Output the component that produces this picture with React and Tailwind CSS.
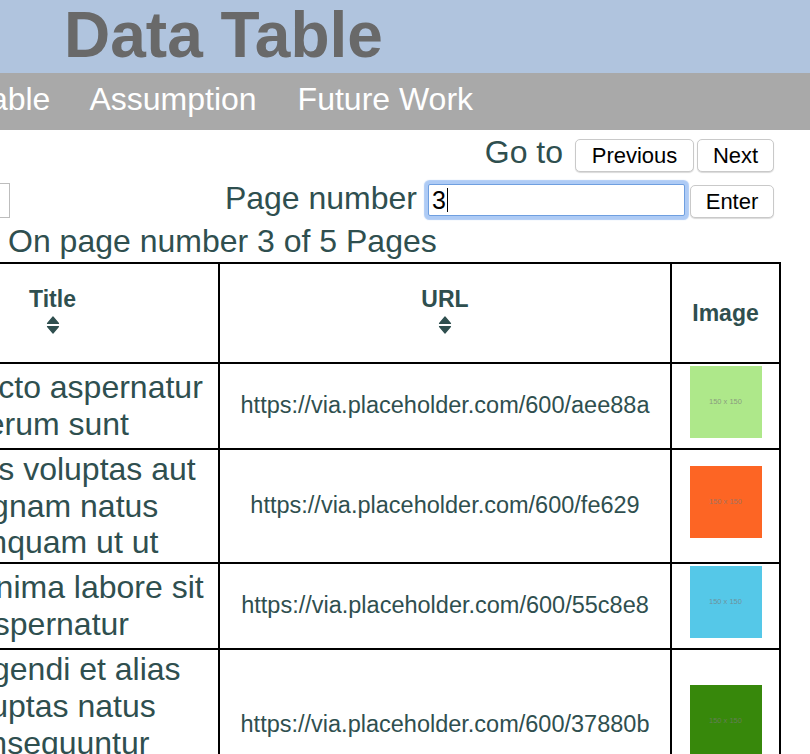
import React from "react";

const SortIcon = () => (
  <svg width="14" height="18" viewBox="0 0 14 18" className="block">
    <path d="M7 1 L12.5 7.5 H1.5 Z" fill="#2f4f4f" stroke="#2f4f4f" strokeWidth="1.2" strokeLinejoin="round" />
    <path d="M1.5 10.5 H12.5 L7 17 Z" fill="#2f4f4f" stroke="#2f4f4f" strokeWidth="1.2" strokeLinejoin="round" />
  </svg>
);

const rows = [
  {
    title: "architecto aspernatur rerum sunt",
    url: "https://via.placeholder.com/600/aee88a",
    img: "bg-[#aee88a]",
    h: "h-[86px]",
  },
  {
    title: "dolores voluptas aut magnam natus quinquam ut ut",
    url: "https://via.placeholder.com/600/fe629",
    img: "bg-[#fd6524]",
    h: "h-[114px]",
  },
  {
    title: "sed minima labore sit aspernatur",
    url: "https://via.placeholder.com/600/55c8e8",
    img: "bg-[#55c8e8]",
    h: "h-[86px]",
  },
  {
    title: "et eligendi et alias voluptas natus consequuntur reprehenderit",
    url: "https://via.placeholder.com/600/37880b",
    img: "bg-[#37880b]",
    h: "h-[151px]",
  },
];

const btn =
  "h-[33px] shrink-0 rounded-[5px] border border-[#c9c9c9] bg-white text-[22px] leading-none text-black shadow-[0_1px_1px_rgba(0,0,0,0.15)] flex items-center justify-center";

export default function App() {
  return (
    <div className="w-[810px] h-[754px] overflow-hidden bg-white font-['Liberation_Sans',Arial,Helvetica,sans-serif]">
      {/* Header */}
      <div className="h-[73px] bg-[#b0c4de] pl-[64px]">
        <h1 className="text-[64px] font-bold leading-[70px] text-[#696969] whitespace-nowrap">Data Table</h1>
      </div>

      {/* Nav */}
      <div className="h-[57px] bg-[#a9a9a9] flex items-start pt-[8px] text-[32px] leading-[36px] text-white whitespace-nowrap">
        <span className="shrink-0 ml-[-102px]">Data Table</span>
        <span className="shrink-0 ml-[39px]">Assumption</span>
        <span className="shrink-0 ml-[41px]">Future Work</span>
      </div>

      {/* Go to row */}
      <div className="mt-[4px] flex items-start justify-end pr-[36px] text-[#2f4f4f]">
        <span className="text-[32px] leading-[36px] mr-[12px]">Go to</span>
        <button className={`${btn} w-[119px] mt-[5px]`}>Previous</button>
        <button className={`${btn} w-[77px] mt-[5px] ml-[3px]`}>Next</button>
      </div>

      {/* Page number row */}
      <div className="mt-[8px] flex items-start pr-[36px] text-[#2f4f4f]">
        <div className="shrink-0 w-[150px] ml-[-140px] h-[35px] mt-[3px] border border-[#bdbdbd] bg-white" />
        <div className="flex-1" />
        <span className="text-[32px] leading-[36px] whitespace-nowrap">Page number</span>
        <div className="shrink-0 ml-[11px] mt-[4px] w-[257px] h-[32px] rounded-[2px] border border-[#6f9fe0] bg-white shadow-[0_0_1px_4px_rgba(130,175,240,0.65)] flex items-center pl-[3px] text-[25px] text-black">
          <span className="leading-none">3</span>
          <span className="inline-block w-[1.5px] h-[24px] bg-black ml-[1px]" />
        </div>
        <button className={`${btn} w-[84px] h-[32px] mt-[5px] ml-[5px]`}>Enter</button>
      </div>

      {/* Page info */}
      <div className="mt-[5px] pl-[8px] text-[32px] leading-[36px] text-[#2f4f4f] whitespace-nowrap">
        On page number 3 of 5 Pages
      </div>

      {/* Table */}
      <div className="mt-[3px] ml-[-115px] w-[896px] border-t-2 border-l-2 border-r-2 border-black text-[#2f4f4f]">
        {/* Header row */}
        <div className="flex h-[100px] border-b-2 border-black">
          <div className="w-[333px] shrink-0 border-r-2 border-black px-[1px] flex flex-col items-center justify-center">
            <span className="text-[23px] font-bold leading-[26px]">Title</span>
            <div className="mt-[4px] mb-[6px]">
              <SortIcon />
            </div>
          </div>
          <div className="w-[452px] shrink-0 border-r-2 border-black flex flex-col items-center justify-center">
            <span className="text-[23px] font-bold leading-[26px]">URL</span>
            <div className="mt-[4px] mb-[6px]">
              <SortIcon />
            </div>
          </div>
          <div className="flex-1 flex items-center justify-center">
            <span className="text-[23px] font-bold leading-[26px]">Image</span>
          </div>
        </div>

        {rows.map((r, i) => (
          <div key={i} className={`flex ${r.h} border-b-2 border-black`}>
            <div className="w-[333px] shrink-0 border-r-2 border-black px-[1px] flex items-center justify-center text-center text-[32px] leading-[1.15]">
              <span>{r.title}</span>
            </div>
            <div className="w-[452px] shrink-0 border-r-2 border-black flex items-center justify-center text-[23.5px] whitespace-nowrap">
              {r.url}
            </div>
            <div className="flex-1 flex flex-col items-center justify-center">
              <div className={`w-[72px] h-[72px] mb-[8px] ${r.img} flex items-center justify-center text-[7.5px] whitespace-nowrap text-[rgba(120,120,120,0.7)]`}>
                150 x 150
              </div>
            </div>
          </div>
        ))}
      </div>
    </div>
  );
}
